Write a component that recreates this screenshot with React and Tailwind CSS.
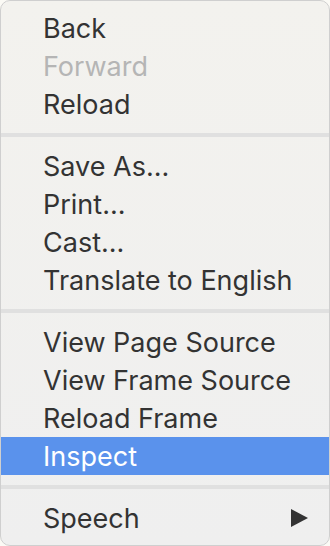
import React from "react";

const groups = [
  [
    { label: "Back" },
    { label: "Forward", disabled: true },
    { label: "Reload" },
  ],
  [
    { label: "Save As..." },
    { label: "Print..." },
    { label: "Cast..." },
    { label: "Translate to English" },
  ],
  [
    { label: "View Page Source" },
    { label: "View Frame Source" },
    { label: "Reload Frame" },
    { label: "Inspect", active: true },
  ],
  [{ label: "Speech", submenu: true }],
];

const MenuItem = ({ item }) => {
  let color = "text-[#333333]";
  if (item.disabled) color = "text-[#b5b5b5]";
  if (item.active) color = "text-white bg-[#5a92ec]";

  return (
    <div className={`flex h-[38px] items-center justify-between pl-[42px] pr-[21px] ${color}`}>
      <span>{item.label}</span>
      {item.submenu && (
        <svg width="17" height="18" viewBox="0 0 17 18">
          <path d="M0 0 L17 9 L0 18 Z" fill="#333333" />
        </svg>
      )}
    </div>
  );
};

export default function App() {
  return (
    <div className="h-[546px] w-[330px] bg-[#fbfaf5]">
      <div
        className="flex h-full w-full flex-col overflow-hidden rounded-[10px] border border-[#cfcfcf] bg-gradient-to-b from-[#f3f2ee] to-[#efefef] pt-[8px] text-[27px] leading-none"
        style={{ fontFamily: "Inter, 'Liberation Sans', sans-serif" }}
      >
        {groups.map((group, gi) => (
          <div key={gi}>
            {gi > 0 && (
              <div className="py-[10px]">
                <div className="h-[4px] bg-[#e0e0e0]" />
              </div>
            )}
            {group.map((item) => (
              <MenuItem key={item.label} item={item} />
            ))}
          </div>
        ))}
      </div>
    </div>
  );
}
